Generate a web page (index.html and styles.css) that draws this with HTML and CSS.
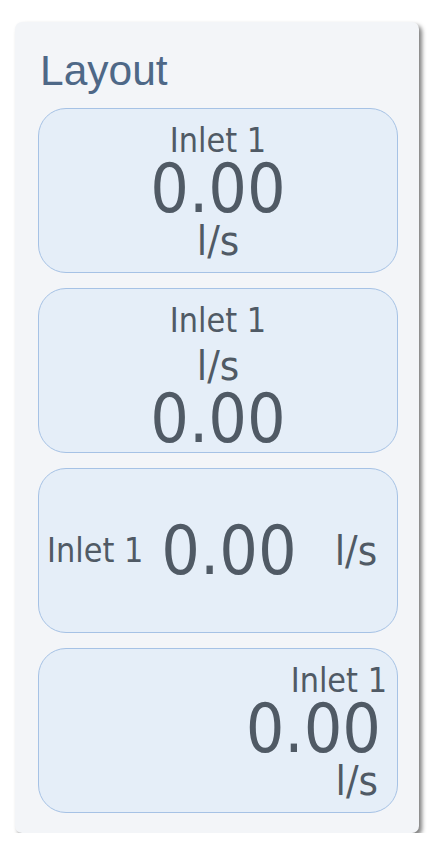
FILE: index.html
```html
<!DOCTYPE html>
<html>
<head>
<meta charset="utf-8">
<title>Layout</title>
<link rel="stylesheet" href="styles.css">
</head>
<body>
<div class="panel">
  <div class="title">Layout</div>
  <div class="card card-stack">
    <div class="label">Inlet 1</div>
    <div class="value">0.00</div>
    <div class="unit">l/s</div>
  </div>
  <div class="card card-stack">
    <div class="label">Inlet 1</div>
    <div class="unit">l/s</div>
    <div class="value">0.00</div>
  </div>
  <div class="card card-row">
    <div class="label">Inlet 1</div>
    <div class="value">0.00</div>
    <div class="unit">l/s</div>
  </div>
  <div class="card card-stack card-right">
    <div class="label">Inlet 1</div>
    <div class="value">0.00</div>
    <div class="unit">l/s</div>
  </div>
</div>
</body>
</html>
```
FILE: styles.css
```css
html, body {
  margin: 0;
  padding: 0;
  background: #ffffff;
}

.panel {
  box-sizing: border-box;
  width: 404px;
  height: 811px;
  margin: 22px 0 0 15px;
  padding: 24px 21px 20px 23px;
  background: #f3f5f8;
  border-radius: 7px;
  box-shadow: 3px 3px 4px rgba(0, 0, 0, 0.5);
  display: flex;
  flex-direction: column;
  gap: 15px;
}

.title {
  font-family: "Liberation Sans", Arial, sans-serif;
  font-size: 42.5px;
  line-height: 50px;
  color: #4e6887;
  margin: 0 0 -3px 2px;
}

.card {
  box-sizing: border-box;
  width: 360px;
  height: 165px;
  flex: none;
  background: #e5eef8;
  border: 1.5px solid #a6c2e5;
  border-radius: 28px;
  font-family: "DejaVu Sans Condensed", "DejaVu Sans", sans-serif;
  font-stretch: condensed;
  color: #505a65;
}

.card-stack {
  display: flex;
  flex-direction: column;
  align-items: center;
  padding-top: 12px;
}

.card-right {
  align-items: flex-end;
  padding-right: 10px;
}

.label {
  font-size: 33.8px;
  line-height: 40px;
  white-space: nowrap;
}

.value {
  font-size: 67.6px;
  line-height: 55px;
  white-space: nowrap;
}

.unit {
  font-size: 41.6px;
  line-height: 50px;
  white-space: nowrap;
}

.card-right .value {
  margin-right: 6px;
}

.card-right .unit {
  margin-right: 9px;
}

.card-row {
  display: flex;
  flex-direction: row;
  align-items: center;
  padding-left: 8px;
}

.card-row .label {
  margin-right: 18px;
}

.card-row .value {
  margin-right: 38px;
}
```
